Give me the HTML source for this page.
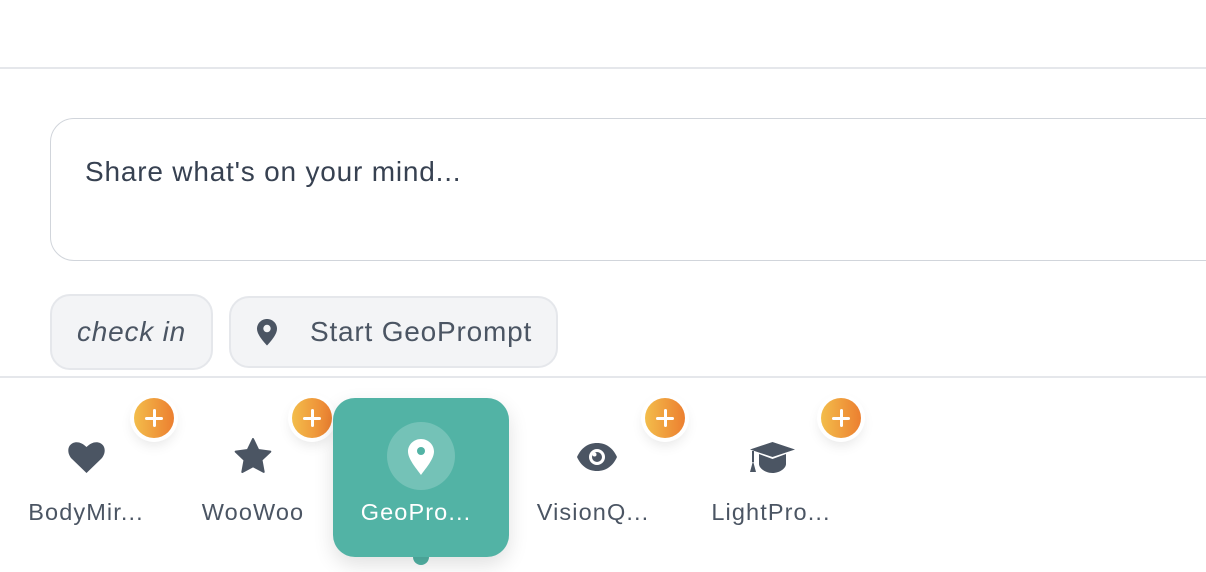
<!DOCTYPE html><html><head><style>
body{margin:0;width:1206px;height:572px;background:#fff;position:relative;overflow:hidden;font-family:"Liberation Sans",sans-serif}
.a{position:absolute}
.line{position:absolute;left:0;width:1206px;height:2px;background:#e5e7eb}
.ta{left:50px;top:118px;width:1200px;height:141px;border:1.5px solid #d1d5db;border-radius:24px}
.ta span{position:absolute;left:34px;top:37px;font-size:28px;color:#374151;letter-spacing:0.8px}
.btn{background:#f3f4f6;border:2px solid #e5e7eb;border-radius:20px;box-sizing:border-box;font-size:28px;color:#4b5563;display:flex;align-items:center;letter-spacing:0.8px}
.lbl{position:absolute;top:499px;width:160px;text-align:center;font-size:23.5px;color:#4b5563;letter-spacing:1.1px}
.plus{position:absolute;width:40px;height:40px;border-radius:50%;background:linear-gradient(90deg,#f3bd4b,#ec7f30);box-shadow:0 0 0 4px #fff,0 6px 14px rgba(0,0,0,.12)}
.plus:before,.plus:after{content:"";position:absolute;background:#fff;border-radius:2px;left:19px;top:11px;width:3px;height:18px}
.plus:after{left:11px;top:19px;width:18px;height:3px}
.ic{position:absolute}
</style></head><body>
<div class="line" style="top:67px"></div>
<div class="a ta"><span>Share what's on your mind...</span></div>
<div class="a btn" style="left:50px;top:294px;width:163px;height:76px;justify-content:center"><i>check in</i></div>
<div class="a btn" style="left:229px;top:296px;width:329px;height:72px">
<svg style="margin-left:25px" width="22" height="28" viewBox="0 0 22 28"><path d="M11 1C5.5 1 1 5.3 1 10.8c0 6 7 13.6 10 16.7 3-3.1 10-10.7 10-16.7C21 5.3 16.5 1 11 1z" fill="#4b5563"/><circle cx="11" cy="10.5" r="3.7" fill="#f3f4f6"/></svg>
<span style="margin-left:32px">Start GeoPrompt</span></div>
<div class="line" style="top:376px"></div>

<svg class="ic" style="left:68px;top:441px" width="37" height="33" viewBox="0 0 37 33"><path d="M18.5 32L4 18C-1 13-1 5 4.5 2.2 9 0 14 1.5 18.5 6 23 1.5 28 0 32.5 2.2 38 5 38 13 33 18z" fill="#4b5563"/></svg>
<svg class="ic" style="left:234px;top:438px" width="38" height="36" viewBox="0 0 38 36"><path d="M19 1l5.3 11 12 1.6-8.8 8.3 2.2 12L19 28.2 8.3 34l2.2-12L1.7 13.6l12-1.6z" fill="#4b5563" stroke="#4b5563" stroke-width="2" stroke-linejoin="round"/></svg>
<svg class="ic" style="left:576px;top:442px" width="42" height="30" viewBox="0 0 42 30"><path d="M1 15C5 6 12 1 21 1s16 5 20 14c-4 9-11 14-20 14S5 24 1 15z" fill="#4b5563"/><circle cx="21" cy="15" r="8" fill="#fff"/><circle cx="21" cy="15" r="5" fill="#4b5563"/><circle cx="18.5" cy="12.5" r="2" fill="#fff"/></svg>
<svg class="ic" style="left:749px;top:441px" width="47" height="33" viewBox="0 0 47 33"><path d="M23.5 1L46 8.5 23.5 16 1 8.5z" fill="#4b5563"/><path d="M10 13l13.5 5L37 13v10c0 4-6 9-13.5 9S10 27 10 23z" fill="#4b5563"/><path d="M4 10v11" stroke="#4b5563" stroke-width="2"/><path d="M1 31l3-11 3 11z" fill="#4b5563"/></svg>

<div class="lbl" style="left:6px">BodyMir...</div>
<div class="lbl" style="left:173px">WooWoo</div>
<div class="lbl" style="left:513px">VisionQ...</div>
<div class="lbl" style="left:691px">LightPro...</div>

<div class="plus" style="left:134px;top:398px"></div>
<div class="plus" style="left:292px;top:398px"></div>
<div class="plus" style="left:645px;top:398px"></div>
<div class="plus" style="left:821px;top:398px"></div>

<div class="a" style="left:413px;top:549px;width:16px;height:16px;border-radius:50%;background:#52b3a5"></div>
<div class="a" style="left:333px;top:398px;width:176px;height:159px;border-radius:22px;background:#52b3a5;box-shadow:0 8px 20px rgba(0,0,0,.12)">
<div class="a" style="left:54px;top:24px;width:68px;height:68px;border-radius:50%;background:rgba(255,255,255,.2)"></div>
<svg class="a" style="left:74px;top:40px" width="28" height="38" viewBox="0 0 28 38"><path d="M14 1C7 1 1 6.5 1 13.5 1 21 9 30 14 37 19 30 27 21 27 13.5 27 6.5 21 1 14 1z" fill="#fff"/><circle cx="14" cy="13" r="4" fill="#52b3a5"/></svg>
<div class="a" style="left:0;top:101px;width:166px;text-align:center;font-size:23.5px;color:#fff;letter-spacing:1.1px">GeoPro...</div>
</div>
</body></html>
